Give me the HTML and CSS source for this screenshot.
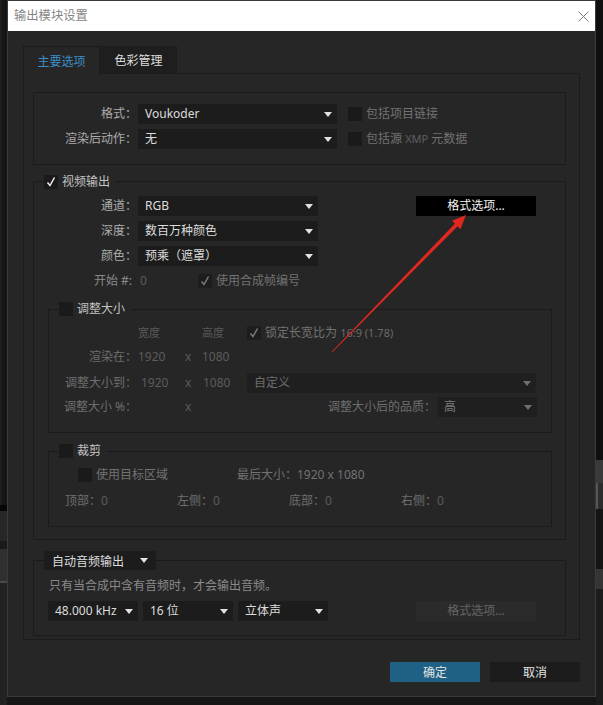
FILE: index.html
```html
<!DOCTYPE html>
<html>
<head>
<title>输出模块设置</title>
<link rel="stylesheet" href="styles.css">
</head>
<body>
<div class="strip">
  <div class="lb1"></div><div class="lb2"></div><div class="lb3"></div><div class="lb4"></div>
  <div class="lb5"></div><div class="lb6"></div><div class="lb7"></div>
</div>

<div class="dialog">
  <div class="titlebar">
    <span class="title">输出模块设置</span>
    <svg class="close" width="11" height="11" viewBox="0 0 11 11"><path d="M0.5 0.5 L10.5 10.5 M10.5 0.5 L0.5 10.5" stroke="#7d7d7d" stroke-width="1" fill="none"/></svg>
  </div>

  <div class="content">
    <div class="tabs">
      <div class="tab active">主要选项</div>
      <div class="tab">色彩管理</div>
    </div>

    <div class="panel">
      <!-- format -->
      <div class="box">
        <div class="row">
          <span class="lbl">格式：</span>
          <div class="sel w199"><span>Voukoder</span><i class="caret"></i></div>
          <span class="chk chk-gap"></span><span class="dim">包括项目链接</span>
        </div>
        <div class="row">
          <span class="lbl">渲染后动作：</span>
          <div class="sel w199"><span>无</span><i class="caret"></i></div>
          <span class="chk chk-gap"></span><span class="dim">包括源 <span class="xmp">XMP</span> 元数据</span>
        </div>
      </div>

      <!-- video -->
      <fieldset class="grp">
        <legend class="lgd"><span class="chk"><svg width="14" height="14" viewBox="0 0 14 14"><path d="M3.5 7.5 L6 10.5 L10.5 2.5" stroke="#f0f0f0" stroke-width="1.5" fill="none"/></svg></span><span class="lgd-text">视频输出</span></legend>
        <div class="video-inner">
          <div class="row">
            <span class="lbl">通道：</span>
            <div class="sel w180"><span>RGB</span><i class="caret"></i></div>
            <button class="fmt-btn">格式选项...</button>
          </div>
          <div class="row">
            <span class="lbl">深度：</span>
            <div class="sel w180"><span>数百万种颜色</span><i class="caret"></i></div>
          </div>
          <div class="row">
            <span class="lbl">颜色：</span>
            <div class="sel w180"><span>预乘（遮罩）</span><i class="caret"></i></div>
          </div>
          <div class="row row-start">
            <span class="lbl start-lbl">开始 #:</span>
            <span class="start-val">0</span>
            <span class="chk dis"><svg width="14" height="14" viewBox="0 0 14 14"><path d="M3.5 7.5 L6 10.5 L10.5 2.5" stroke="#7a7a7a" stroke-width="1.5" fill="none"/></svg></span>
            <span class="dim gap4">使用合成帧编号</span>
          </div>

          <!-- resize -->
          <fieldset class="sub resize">
            <legend class="lgd sub-lgd"><span class="chk"></span><span class="lgd-text">调整大小</span></legend>
            <div class="resize-inner">
              <div class="rrow rhead">
                <span class="rlbl"></span>
                <span class="v1 hd">宽度</span><span class="vx"></span><span class="v2 hd">高度</span>
                <span class="chk dis"><svg width="14" height="14" viewBox="0 0 14 14"><path d="M3.5 7.5 L6 10.5 L10.5 2.5" stroke="#7a7a7a" stroke-width="1.5" fill="none"/></svg></span>
                <span class="dim gap4">锁定长宽比为 <span class="small">16:9 (1.78)</span></span>
              </div>
              <div class="rrow rrender">
                <span class="rlbl">渲染在：</span>
                <span class="v1 val">1920</span><span class="vx val">x</span><span class="v2 val">1080</span>
              </div>
              <div class="rrow rto">
                <span class="rlbl">调整大小到：</span>
                <span class="v1 val sh3">1920</span><span class="vx val">x</span><span class="v2 val sh1">1080</span>
                <div class="sel dsel w289"><span>自定义</span><i class="caret dcaret"></i></div>
              </div>
              <div class="rrow rpct">
                <span class="rlbl">调整大小 %：</span>
                <span class="v1"></span><span class="vx val">x</span><span class="v2"></span>
                <span class="qlbl">调整大小后的品质：</span>
                <div class="sel dsel w100"><span class="q">高</span><i class="caret dcaret"></i></div>
              </div>
            </div>
          </fieldset>

          <!-- crop -->
          <fieldset class="sub crop">
            <legend class="lgd sub-lgd"><span class="chk"></span><span class="lgd-text">裁剪</span></legend>
            <div class="crop-inner">
              <div class="crow">
                <span class="chk target"></span><span class="dim gap4 target-lbl">使用目标区域</span>
                <span class="dim">最后大小：1920 x 1080</span>
              </div>
              <div class="crow sides">
                <span class="side">顶部：<span class="val">0</span></span>
                <span class="side">左侧：<span class="val">0</span></span>
                <span class="side">底部：<span class="val">0</span></span>
                <span class="side">右侧：<span class="val">0</span></span>
              </div>
            </div>
          </fieldset>
        </div>
      </fieldset>

      <!-- audio -->
      <fieldset class="grp audio">
        <legend class="audio-lgd"><span>自动音频输出</span><i class="caret"></i></legend>
        <div class="audio-inner">
          <div class="note">只有当合成中含有音频时，才会输出音频。</div>
          <div class="row audio-row">
            <div class="sel w90 first"><span>48.000 kHz</span><i class="caret"></i></div>
            <div class="sel w90"><span>16 位</span><i class="caret"></i></div>
            <div class="sel w90"><span>立体声</span><i class="caret"></i></div>
            <button class="fmt-btn off">格式选项...</button>
          </div>
        </div>
      </fieldset>
    </div>

    <div class="footer">
      <button class="btn primary">确定</button>
      <button class="btn">取消</button>
    </div>
  </div>
</div>

<div class="strip">
  <div class="rb1"></div><div class="rb2"></div><div class="rb3"></div>
  <div class="rb4"></div><div class="rb5"></div><div class="rb6"></div>
</div>

<svg class="arrow" width="603" height="705" viewBox="0 0 603 705">
  <polygon points="331.7,351.7 332.3,352.3 457.9,225.9 455.3,223.3" fill="#e2271f"/>
  <polygon points="466,215 460.4,229.2 452,220.8" fill="#e2271f"/>
</svg>
</body>
</html>
```

FILE: styles.css
```css
body {
  margin: 0;
  width: 603px;
  height: 705px;
  overflow: hidden;
  display: flex;
  background: #161616;
  font-family: "Noto Sans", "Noto Sans CJK SC", sans-serif;
  font-size: 12px;
  color: #acacac;
}

/* background app strips */
.strip {
  width: 7px;
  flex: none;
  display: flex;
  flex-direction: column;
  overflow: hidden;
}

.lb1 { height: 505px; background: #151515; border-left: 2px solid #1e1e1e; }
.lb2 { height: 6px; background: #060606; }
.lb3 { height: 30px; background: #272727; }
.lb4 { height: 8px; background: #1a1a1a; }
.lb5 { height: 32px; background: #303030; }
.lb6 { height: 2px; background: #4a4a4a; }
.lb7 { height: 122px; background: #222; }

.rb1 { height: 460px; background: #0f0f0f; }
.rb2 { height: 23px; background: #3a3a3a; }
.rb3 { height: 26px; background: #2c2c2c; border-left: 2px solid #555; box-sizing: border-box; }
.rb4 { height: 60px; background: #141414; }
.rb5 { height: 20px; background: #353535; }
.rb6 { height: 116px; background: #1c1c1c; }

/* dialog */
.dialog {
  width: 589px;
  height: 697px;
  flex: none;
  box-sizing: border-box;
  border: 1px solid #3b3b3b;
  background: #262626;
}

.titlebar {
  height: 30px;
  background: #fff;
  display: flex;
  align-items: center;
  justify-content: space-between;
  padding: 0 6px;
}

.title {
  color: #848484;
  font-size: 12.3px;
  line-height: 16px;
}

.content {
  padding: 15px 15px 0 15px;
}

.tabs {
  display: flex;
  align-items: flex-start;
  height: 27px;
}

.tab {
  width: 77px;
  height: 27px;
  box-sizing: border-box;
  display: flex;
  align-items: center;
  justify-content: center;
  background: #1e1e1e;
  color: #dedede;
}

.tab.active {
  position: relative;
  height: 28px;
  background: #262626;
  color: #3c8dc8;
  border: 1px solid #1b1b1b;
  border-bottom: none;
}

.panel {
  width: 557px;
  height: 567px;
  box-sizing: border-box;
  border: 1px solid #1b1b1b;
  padding: 18px 0 0 9px;
}

.box {
  width: 533px;
  box-sizing: border-box;
  border: 1px solid #1b1b1b;
  padding: 11px 0 15px 0;
}

.row {
  display: flex;
  align-items: center;
  height: 20px;
  line-height: 16px;
}

.row + .row {
  margin-top: 5px;
}

.lbl {
  width: 103px;
  flex: none;
  text-align: right;
  color: #adadad;
}

.sel {
  margin-left: 1px;
  height: 20px;
  flex: none;
  box-sizing: border-box;
  display: flex;
  align-items: center;
  justify-content: space-between;
  padding: 0 5px 0 7px;
  background: #1c1c1c;
  color: #dcdcdc;
}

.w199 { width: 199px; }
.w180 { width: 180px; }
.w289 { width: 289px; margin-left: 0; }
.w100 { width: 100px; }
.w90 { width: 90px; margin-left: 5px; }
.w90.first { margin-left: 0; }

.caret {
  width: 0;
  height: 0;
  border-left: 4px solid transparent;
  border-right: 4px solid transparent;
  border-top: 5px solid #e2e2e2;
}

.dsel {
  background: #1f1f1f;
  color: #6c6c6c;
}

.dcaret {
  border-top-color: #6f6f6f;
}

.q { color: #7c7c7c; }

.chk {
  width: 14px;
  height: 14px;
  flex: none;
  background: #1a1a1a;
  display: inline-flex;
}

.chk.dis { background: #1d1d1d; }

.chk-gap { margin-left: 11px; }

.dim {
  color: #727272;
  margin-left: 4px;
}

.xmp { font-size: 11px; color: #5f5f5f; }

.gap4 { margin-left: 4px; }

/* fieldsets */
.grp {
  width: 533px;
  min-width: 0;
  box-sizing: border-box;
  margin: 9px 0 0 0;
  padding: 0;
  border: 1px solid #1b1b1b;
}

.lgd {
  margin-left: 10px;
  padding: 0 6px 0 0;
  height: 15px;
  display: flex;
  align-items: center;
  line-height: 15px;
}

.lgd-text {
  margin-left: 4px;
  color: #c2c2c2;
}

.video-inner {
  padding: 7px 0 12px 0;
}

.fmt-btn {
  margin-left: 98px;
  width: 120px;
  height: 20px;
  padding: 0;
  border: none;
  background: #000;
  color: #f2f2f2;
  font: inherit;
}

.fmt-btn.off {
  margin-left: 88px;
  background: #2b2b2b;
  color: #666;
}

.row.row-start {
  margin-top: 7px;
  height: 15px;
}

.start-lbl {
  padding-right: 5px;
  box-sizing: border-box;
  color: #8a8a8a;
}

.start-val {
  width: 58px;
  margin-left: 3px;
  color: #5c5c5c;
}

.sub {
  width: 504px;
  min-width: 0;
  box-sizing: border-box;
  margin: 14px 0 0 14px;
  padding: 0;
  border: 1px solid #1b1b1b;
}

.sub-lgd { height: 14px; line-height: 14px; }

.resize-inner {
  padding: 9px 0 15px 0;
  line-height: 16px;
}

.rrow {
  display: flex;
  align-items: center;
}

.rhead { height: 15px; }
.rrender { height: 16px; margin-top: 9px; }
.rto { height: 20px; margin-top: 8px; }
.rpct { height: 20px; margin-top: 4px; }

.rlbl {
  width: 88px;
  flex: none;
  text-align: right;
  color: #6e6e6e;
  white-space: nowrap;
}

.v1 { width: 47px; margin-left: 1px; flex: none; box-sizing: border-box; }
.vx { width: 17px; flex: none; }
.v2 { width: 45px; flex: none; box-sizing: border-box; }

.sh3 { padding-left: 3px; }
.sh1 { padding-left: 1px; }

.hd { font-size: 11px; color: #5a5a5a; }
.val { color: #5c5c5c; }
.small { font-size: 11px; color: #6a6a6a; }

.qlbl {
  width: 189px;
  flex: none;
  text-align: right;
  color: #6e6e6e;
}

.sub.crop { margin-top: 11px; }

.crop-inner {
  padding: 10px 0 18px 0;
  line-height: 14px;
}

.crow {
  display: flex;
  align-items: center;
  height: 14px;
}

.chk.target { margin-left: 29px; }
.target-lbl { width: 137px; }

.crow.sides {
  margin-top: 12px;
  padding-left: 16px;
}

.side {
  width: 112px;
  color: #6e6e6e;
}

/* audio */
.grp.audio { margin-top: 11px; }

.audio-lgd {
  margin-left: 10px;
  padding: 0 8px 0 8px;
  width: 112px;
  height: 19px;
  box-sizing: border-box;
  display: flex;
  align-items: center;
  justify-content: space-between;
  background: #1c1c1c;
  color: #dcdcdc;
}

.audio-inner {
  padding: 8px 0 14px 15px;
}

.note {
  line-height: 16px;
  color: #8a8a8a;
}

.audio-row {
  margin: 7px 0 0 -1px;
}

.footer {
  display: flex;
  justify-content: flex-end;
  gap: 10px;
  margin-top: 22px;
}

.btn {
  width: 90px;
  height: 20px;
  padding: 0;
  border: none;
  background: #1c1c1c;
  color: #e4e4e4;
  font: inherit;
}

.btn.primary {
  background: #1f6085;
}

.arrow {
  position: absolute;
  left: 0;
  top: 0;
  pointer-events: none;
}
```
